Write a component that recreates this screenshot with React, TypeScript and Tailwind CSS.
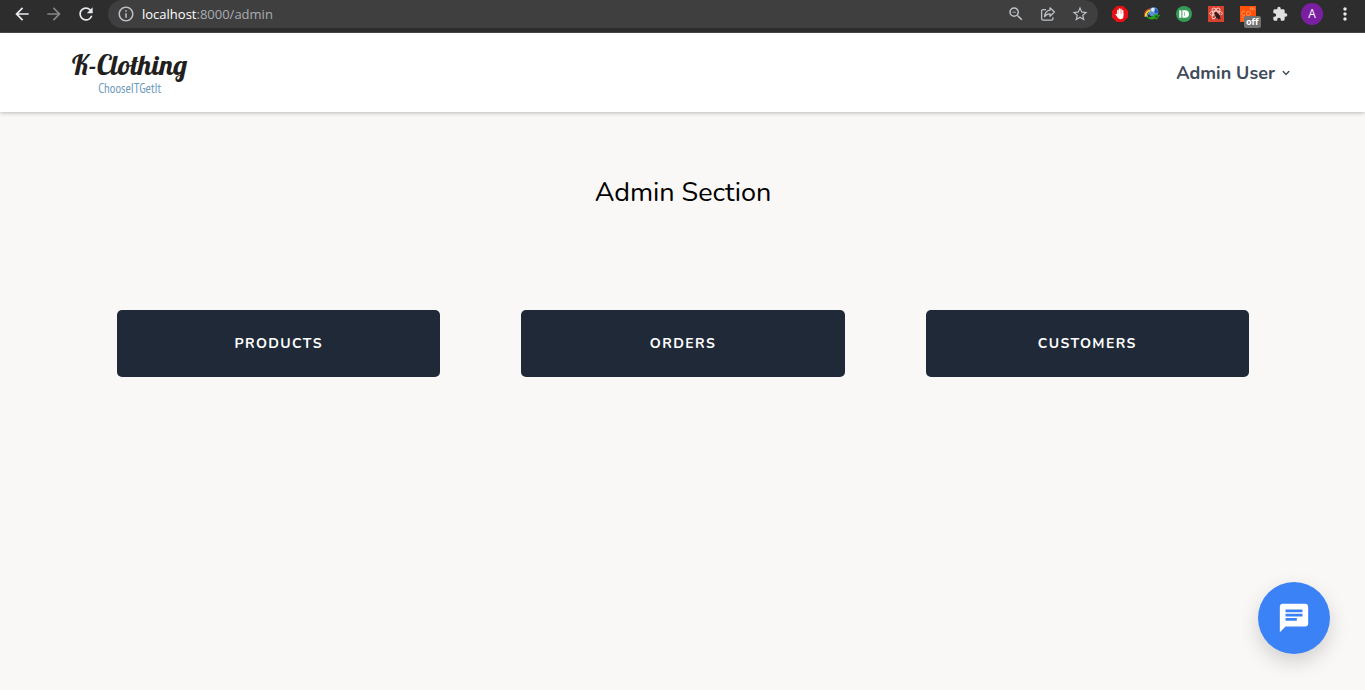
import React from "react";
import {
  MdArrowBack,
  MdArrowForward,
  MdChat,
  MdExtension,
  MdInfoOutline,
  MdMoreVert,
  MdRefresh,
  MdStarOutline,
  MdZoomOut,
} from "react-icons/md";

function ShareIcon() {
  return (
    <svg viewBox="0 0 16 16" className="size-4" fill="none" stroke="currentColor" strokeWidth="1.3" strokeLinejoin="round">
      <path d="M6 3.6H3.2a1.6 1.6 0 0 0-1.6 1.6v7.4a1.6 1.6 0 0 0 1.6 1.6h8.2a1.6 1.6 0 0 0 1.6-1.6v-1.4" />
      <path d="M10 1.8 14.4 6 10 10.2V7.8C7.4 7.7 5.8 8.7 4.6 10.6 4.9 7.2 6.6 4.7 10 4.2Z" />
    </svg>
  );
}

function BlockerIcon() {
  return (
    <svg viewBox="0 0 16 16" className="size-4">
      <path d="M4.7 0h6.6L16 4.7v6.6L11.3 16H4.7L0 11.3V4.7Z" fill="#e60f12" />
      <g stroke="#fff" strokeWidth="1.4" strokeLinecap="round" fill="none">
        <path d="M5.8 9V4.4M7.4 8V3M9 8V3.2M10.7 9V4.6M4.2 8.4l1.7 2.2" />
      </g>
      <path d="M5.1 7.6h6.3v2.8c0 1.8-1 2.8-2.9 2.8-1.6 0-2.4-.7-3.4-2.6Z" fill="#fff" />
    </svg>
  );
}

function DownloaderIcon() {
  return (
    <svg viewBox="0 0 18 16" className="h-4 w-[18px]">
      <circle cx="10.6" cy="6" r="4.8" fill="#5b8fd8" />
      <circle cx="10" cy="3.8" r="2" fill="#d9ecff" />
      <path d="M12 2.4c2 .8 3.4 2.2 3.4 4.2l-2.6 1.2L11.4 5Z" fill="#2457ae" />
      <path d="M1.6 10.5C1.2 6.6 3.4 3.6 7.4 2.8" fill="none" stroke="#e6442e" strokeWidth="1.1" />
      <path d="M2.8 10.8C2.6 7.6 4.2 5.2 7.4 4.4" fill="none" stroke="#f4d32f" strokeWidth="2" />
      <path d="M4.4 11C4.4 8.6 5.4 7 7.4 6.2" fill="none" stroke="#45b7e6" strokeWidth="1" />
      <path d="M3.2 10.4c3 1.4 5.6 1.2 8-.8L10 8.2l7.2.8-3.8 5-.6-1.4c-3.6 1.6-7.6.8-9.6-2.2Z" fill="#27a515" />
      <path d="m11.4 9.8 4.6-.4-2.4 3.2Z" fill="#0c6b10" />
    </svg>
  );
}

function PushIcon() {
  return (
    <svg viewBox="0 0 16 16" className="size-4">
      <circle cx="8" cy="8" r="8" fill="#359b56" />
      <rect x="3.2" y="4.2" width="2.2" height="7.6" rx=".6" fill="#fff" />
      <path d="M6.4 4.2h2.8a3.8 3.8 0 0 1 0 7.6H6.4Z" fill="#fff" />
      <path d="M8.2 6.2h.6v3.6h-.6Z" fill="#359b56" />
    </svg>
  );
}

function InspectorIcon() {
  return (
    <svg viewBox="0 0 16 16" className="size-4">
      <rect width="16" height="16" fill="#d9402f" />
      <g fill="none" stroke="#f3cfc8" strokeWidth="1">
        <ellipse cx="8" cy="7.4" rx="2.4" ry="6" transform="rotate(32 8 7.4)" />
        <ellipse cx="8" cy="7.4" rx="2.4" ry="6" transform="rotate(-32 8 7.4)" />
        <ellipse cx="8" cy="7.4" rx="6.4" ry="2.4" />
      </g>
      <ellipse cx="9.8" cy="10.2" rx="2.2" ry="3" fill="#3a1a18" transform="rotate(-35 9.8 10.2)" />
      <circle cx="7.8" cy="7.4" r="1.3" fill="#3a1a18" />
      <path d="m6 10.2 5-2.4M7.4 12.6l5.4-3M10 13.4l3-1.2" stroke="#3a1a18" strokeWidth=".7" />
    </svg>
  );
}

function CommandIcon() {
  return (
    <svg viewBox="0 0 16 16" className="size-4">
      <rect width="16" height="16" fill="#ff5208" />
      <g fill="none" stroke="#ffa27a" strokeWidth=".8">
        <path d="M5 5.6a2.2 2.2 0 1 0 0 3.6" />
        <circle cx="8.4" cy="7.4" r="2" />
        <path d="M10.6 4.2V2q1-.8 1.6.2v2M12.2 2.2q1-1 1.8.2v1.8" />
        <path d="M1.6 11.4h2M1.6 14h2" />
      </g>
    </svg>
  );
}

function BrowserBar() {
  return (
    <div className="flex h-[33px] items-start border-b border-[#4a4a4a] bg-[#2d2d2d] font-['Open_Sans','Noto_Sans',sans-serif]">
      <div className="flex h-7 items-center gap-3 px-3 text-[#e8eaed]">
        <button type="button" aria-label="Back"><MdArrowBack className="size-5" /></button>
        <button type="button" aria-label="Forward" className="text-[#858585]"><MdArrowForward className="size-5" /></button>
        <button type="button" aria-label="Reload"><MdRefresh className="size-5" /></button>
      </div>
      <div className="flex h-7 min-w-0 flex-1 items-center rounded-full bg-[#3f3f3f] px-[9px] text-[#bdc1c6]">
        <MdInfoOutline className="size-[18px]" />
        <a href="/admin" className="ml-[7px] flex-1 text-[13px] leading-5 text-[#a9adb2]">
          <span className="text-white">localhost</span>:8000/admin
        </a>
        <div className="flex items-center gap-[14px]">
          <button type="button" aria-label="Zoom"><MdZoomOut className="size-[18px]" /></button>
          <button type="button" aria-label="Share" className="px-px"><ShareIcon /></button>
          <button type="button" aria-label="Bookmark"><MdStarOutline className="size-[18px]" /></button>
        </div>
      </div>
      <div className="flex h-7 items-center gap-4 pr-2.5 pl-3.5">
        <button type="button" aria-label="Blocker"><BlockerIcon /></button>
        <button type="button" aria-label="Downloader" className="-mx-px"><DownloaderIcon /></button>
        <button type="button" aria-label="Push"><PushIcon /></button>
        <button type="button" aria-label="Inspector"><InspectorIcon /></button>
        <button type="button" className="relative">
          <CommandIcon />
          <span className="absolute top-2.5 left-1 rounded-xs bg-[#737373] px-0.5 text-[9px] leading-3 font-bold text-white">off</span>
        </button>
        <button type="button" aria-label="Extensions" className="text-[#e0e0e0]"><MdExtension className="size-4" /></button>
        <div className="-ml-[3px] flex items-center gap-3">
          <button type="button" className="size-[22px] rounded-full bg-[#7b1fa2] text-xs leading-5 text-white">A</button>
          <button type="button" aria-label="Menu" className="text-[#e8eaed]"><MdMoreVert className="size-5" /></button>
        </div>
      </div>
    </div>
  );
}

const sections = [
  { label: "Products", href: "/admin/products" },
  { label: "Orders", href: "/admin/orders" },
  { label: "Customers", href: "/admin/customers" },
];

export default function App() {
  return (
    <div className="flex min-h-screen flex-col bg-[#faf8f7] font-['Nunito','Lato',sans-serif]">
      <BrowserBar />
      <header className="flex h-[79px] items-center justify-between bg-white px-[72px] shadow-[0_1px_4px_rgba(0,0,0,0.25)]">
        <a href="/" className="flex flex-col items-center">
          <span className="font-['Lobster','Liberation_Serif',serif] text-[28px] leading-8 text-[#231f20]">K-Clothing</span>
          <span className="font-['PT_Sans_Narrow','Open_Sans',sans-serif] text-[13px] leading-4 text-[#6f9bbd]">ChooseITGetIt</span>
        </a>
        <button type="button" className="flex items-center gap-1 text-lg leading-6 font-bold text-[#414b5a]">
          Admin User
          <svg viewBox="0 0 20 20" className="size-3.5" fill="currentColor">
            <path d="M5.3 7.3a1 1 0 0 1 1.4 0L10 10.6l3.3-3.3a1 1 0 1 1 1.4 1.4l-4 4a1 1 0 0 1-1.4 0l-4-4a1 1 0 0 1 0-1.4Z" />
          </svg>
        </button>
      </header>
      <main className="pt-[61px] pr-[116px] pl-[117px]">
        <h1 className="text-center text-[27px] leading-10 font-normal text-black">Admin Section</h1>
        <nav className="mt-[97px] grid grid-cols-3 gap-[81px]">
          {sections.map((s) => (
            <a
              key={s.label}
              href={s.href}
              className="flex h-[67px] items-center justify-center rounded-[5px] bg-[#1f2937] text-sm font-bold tracking-widest text-white uppercase"
            >
              {s.label}
            </a>
          ))}
        </nav>
      </main>
      <button
        type="button"
        aria-label="Open chat"
        className="fixed right-[35px] bottom-9 flex size-[72px] items-center justify-center rounded-full bg-[#3b82f6] text-white shadow-[0_8px_20px_rgba(0,0,0,0.16)]"
      >
        <MdChat className="size-[34px]" />
      </button>
    </div>
  );
}
